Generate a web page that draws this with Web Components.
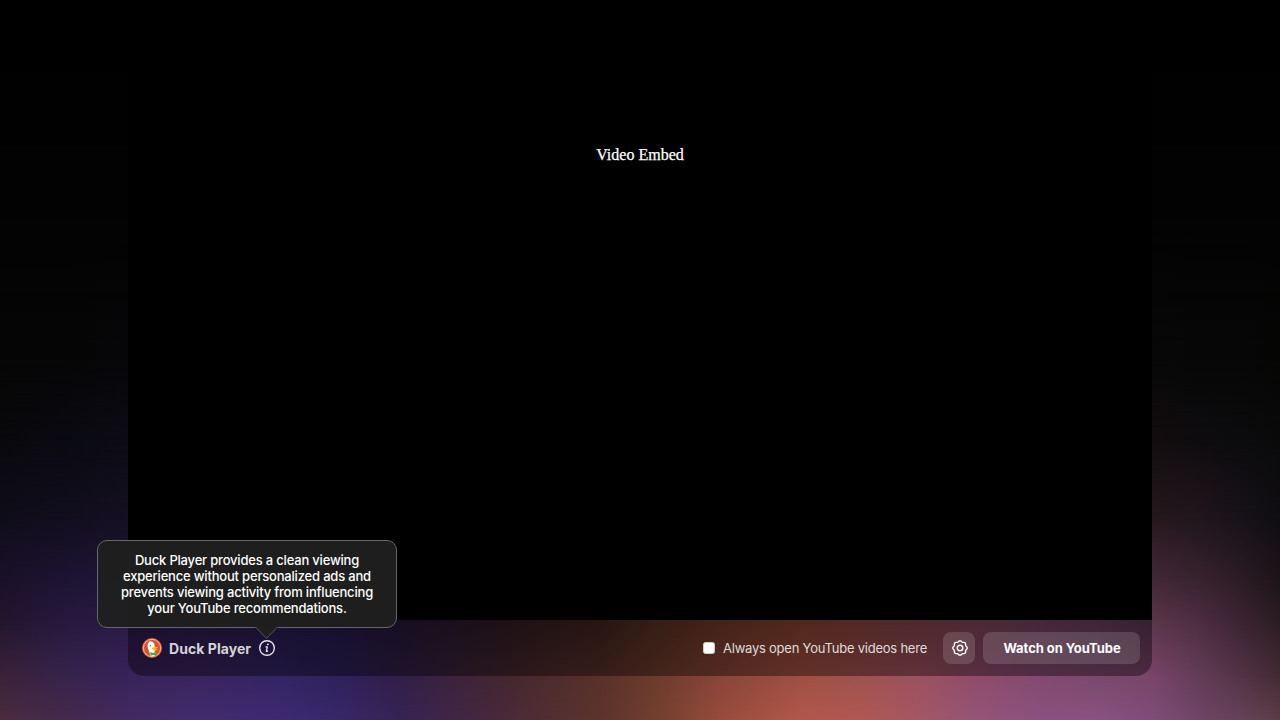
<!DOCTYPE html>
<html lang="en">
<head>
<meta charset="utf-8">
<title>Duck Player</title>
<style>
html,body{margin:0;height:100%;background:#000;overflow:hidden}
</style>
</head>
<body>
<duck-app></duck-app>
<script>
const define = (name, html, after) => customElements.define(name, class extends HTMLElement {
  connectedCallback() {
    if (this.shadowRoot) return;
    this.attachShadow({ mode: 'open' }).innerHTML = html;
    if (after) after(this.shadowRoot, this);
  }
});

// Ambient glow: horizontal colour rows blended vertically into each other.
const stops = [0, 64, 128, 200, 280, 340, 400, 500, 600, 660, 720, 800, 860, 920, 980, 1040, 1100, 1152, 1200, 1240, 1280];
const rows = [
  [0, '000000'],
  [220, '030303'],
  [360, '060606 060607 070709 070709 070709 070709 070709 070707 070707 070707 070707 070707 070707 070707 070707 070707 070707 080808 070707 070707 060605'],
  [440, '09090c 0a0a11 0d0c15 0d0c15 0d0c15 0d0c15 0d0c15 0b0a10 0a0808 0a0808 0a0808 0a0808 0a0808 0d0909 0f0b0b 100b0c 110c0e 130d0f 0e0c0f 0c0b0d 0a0a0b'],
  [520, '100d1b 120e1f 151022 17102a 17102a 160f28 150e20 140d18 1a100c 201208 281409 32180f 381d18 3a1d1e 351c24 33202a 2f1b25 28181e 21161c 18131a 100e12'],
  [580, '1a1128 1d1433 21173a 261745 21163e 1c143a 1b1330 20131c 2e1a16 3a2015 48241b 5b2c22 66332f 633340 5e3445 593647 4f2e40 432938 38232f 2d1c24 1d1419'],
  [620, '23152e 26193d 291a46 2b1c4e 281b4c 251a49 241837 2f1b24 3f231c 573023 6f3727 81412f 83423c 804149 7b4155 70425a 663d58 5a3549 4c2d40 3b2431 2b1c22'],
  [676, '3a2239 37234b 38235a 3a255f 332565 2e215a 321f48 432630 583129 6e3c2e 88453a 9f4f42 a05150 9b5160 8d4c6a 834a70 79496d 784568 623c57 533346 432b33'],
  [720, '4b2c40 452a4c 432b61 442c6f 3d2b70 38286a 372354 49293b 5c342c 75402e 984c3b b1584c b15952 a45765 955479 8c5180 8a5281 7e4e79 704566 66435a 5d3c48']
].map(([y, c]) => {
  const list = c.split(' ');
  return [y, list.length === 1 ? `linear-gradient(#${c},#${c})` : `linear-gradient(to right,${list.map((v, i) => `#${v} ${stops[i] / 12.8}%`).join(',')})`];
});

define('ambient-glow', `<style>
:host{display:grid;width:100%;height:100%;isolation:isolate}
div{grid-area:1/1}
</style>`, root => {
  for (let i = rows.length - 1; i >= 0; i--) {
    const layer = document.createElement('div');
    layer.style.background = rows[i][1];
    if (i < rows.length - 1) {
      const mask = `linear-gradient(to bottom,#000 ${rows[i][0]}px,transparent ${rows[i + 1][0]}px)`;
      layer.style.webkitMaskImage = mask;
      layer.style.maskImage = mask;
    }
    root.append(layer);
  }
});

define('video-embed', `<style>
:host{display:block;box-sizing:border-box;height:620px;padding-top:146px;background:#000;color:#fff;text-align:center;font:16px/18px "Liberation Serif",serif;-webkit-text-stroke:.25px #fff}
</style><slot></slot>`);

define('duck-logo', `<style>:host{display:block;width:20px;height:20px}svg{display:block}</style>
<svg width="20" height="20" viewBox="0 0 20 20">
<circle cx="10" cy="10" r="10" fill="#de5833"/>
<circle cx="10" cy="10" r="8.6" fill="#d9532e" stroke="#f6ddd6" stroke-width=".7"/>
<path d="M8.6 17.9C7.7 14.6 5.6 10.8 5.6 7.6 5.6 5.4 6.6 4.2 8 4.1L7.2 3.4c2.8-.4 5 .8 5.4 3.8l.1 4 .3 6.5c-1.3.5-3.1.6-4.4.2z" fill="#fff"/>
<circle cx="8.4" cy="7.8" r=".7" fill="#3c5a8e"/>
<path d="M9.8 10.1c1-1.1 4-.9 6.3-1.1-.1 1.2-2.2 1.8-3.2 2 1 .3 2.2.3 3 .5-1.6 1.7-5.7 1.4-6.1-1.4z" fill="#fdb91a"/>
<path d="M8.2 14l2.9 1.1 3.2-1.4v4l-3-.8-2.7.9z" fill="#43ae35"/>
</svg>`);

define('info-icon', `<style>:host{display:block;width:16px;height:16px;position:relative}svg{display:block}</style>
<svg width="16" height="16" viewBox="0 0 16 16" fill="none" stroke="#e7e3ec" stroke-linecap="round" stroke-linejoin="round">
<circle cx="8" cy="8" r="7.3" stroke-width="1.4"/>
<path d="M7 6.9h1.3L7.4 11.1c-.1.6.5.6 1.2.1" stroke-width="1.3"/>
<circle cx="8.8" cy="4.4" r=".95" fill="#e7e3ec" stroke="none"/>
</svg><slot></slot>`);

define('info-tooltip', `<style>
:host{position:absolute;z-index:2;left:-162px;bottom:28px;display:block;box-sizing:border-box;width:300px;height:88px;padding:11px 10px 0;border:1px solid #666;border-radius:10px;background:rgba(31,31,31,.97);color:#fff;text-align:center;white-space:nowrap;font:500 13px/16px Inter,sans-serif;letter-spacing:-.19px}
svg{position:absolute;left:157px;top:85px;display:block}
span{display:block}
</style><span>Duck Player provides a clean viewing</span><span>experience without personalized ads and</span><span>prevents viewing activity from influencing</span><span>your YouTube recommendations.</span>
<svg width="23" height="14" viewBox="0 0 23 14"><path d="M0 0h23v1.4h-1L11.5 12.3 1 1.4H0z" fill="#1f1f1f"/><path d="M1 1.5l10.5 10.9L22 1.5" fill="none" stroke="#666" stroke-width=".8"/></svg>`);

define('open-always', `<style>
:host{display:flex;align-items:center;gap:8px;color:rgba(255,255,255,.84);font:400 13px/16px Inter,sans-serif;letter-spacing:-.23px;white-space:nowrap}
i{width:12px;height:12px;box-sizing:border-box;border:1px solid #d0cdcc;border-radius:2.5px;background:#fff}
</style><i></i><span><slot></slot></span>`);

define('bar-button', `<style>
:host{display:flex;align-items:center;justify-content:center;box-sizing:border-box;height:32px;border-radius:8px;background:rgba(255,255,255,.14);color:#fff;font:700 13px/16px Inter,sans-serif;letter-spacing:-.06px;white-space:nowrap}
:host([kind=icon]){width:32px;padding-left:1px}
:host([kind=text]){width:157px;padding-left:1px}
</style><slot></slot>`);

define('gear-icon', `<style>:host{display:block;width:16px;height:16px}svg{display:block}</style>
<svg width="16" height="16" viewBox="0 0 16 16" fill="none" stroke="#fff" stroke-width="1.4" stroke-linejoin="round"><path/><circle cx="8" cy="8" r="2.8"/></svg>`, root => {
  // Eight-lobed outline.
  let d = '';
  for (let i = 0; i < 96; i++) {
    const a = i / 96 * Math.PI * 2, r = 6.75 + .5 * Math.cos(8 * a);
    d += `${i ? 'L' : 'M'}${(8 + r * Math.cos(a)).toFixed(2)} ${(8 + r * Math.sin(a)).toFixed(2)}`;
  }
  root.querySelector('path').setAttribute('d', d + 'z');
});

define('player-bar', `<style>
:host{display:flex;align-items:center;box-sizing:border-box;height:56px;padding:0 12px 0 14px;border-radius:0 0 16px 16px;background:rgba(0,0,0,.38)}
b{margin:2px 8px 0 7px;font:700 14px/18px Inter,sans-serif;letter-spacing:.06px;color:rgba(255,255,255,.83);white-space:nowrap;width:82px}
open-always{margin-left:auto;margin-right:16px}
bar-button+bar-button{margin-left:8px}
</style>
<duck-logo></duck-logo><b>Duck Player</b><info-icon><info-tooltip></info-tooltip></info-icon>
<open-always>Always open YouTube videos here</open-always>
<bar-button kind="icon"><gear-icon></gear-icon></bar-button>
<bar-button kind="text">Watch on YouTube</bar-button>`);

define('duck-app', `<style>
:host{display:grid;width:100%;height:100vh;overflow:hidden}
ambient-glow,main{grid-area:1/1;min-width:0}
main{width:1024px;justify-self:center;z-index:1}
</style>
<ambient-glow></ambient-glow>
<main><video-embed>Video Embed</video-embed><player-bar></player-bar></main>`);
</script>
</body>
</html>
